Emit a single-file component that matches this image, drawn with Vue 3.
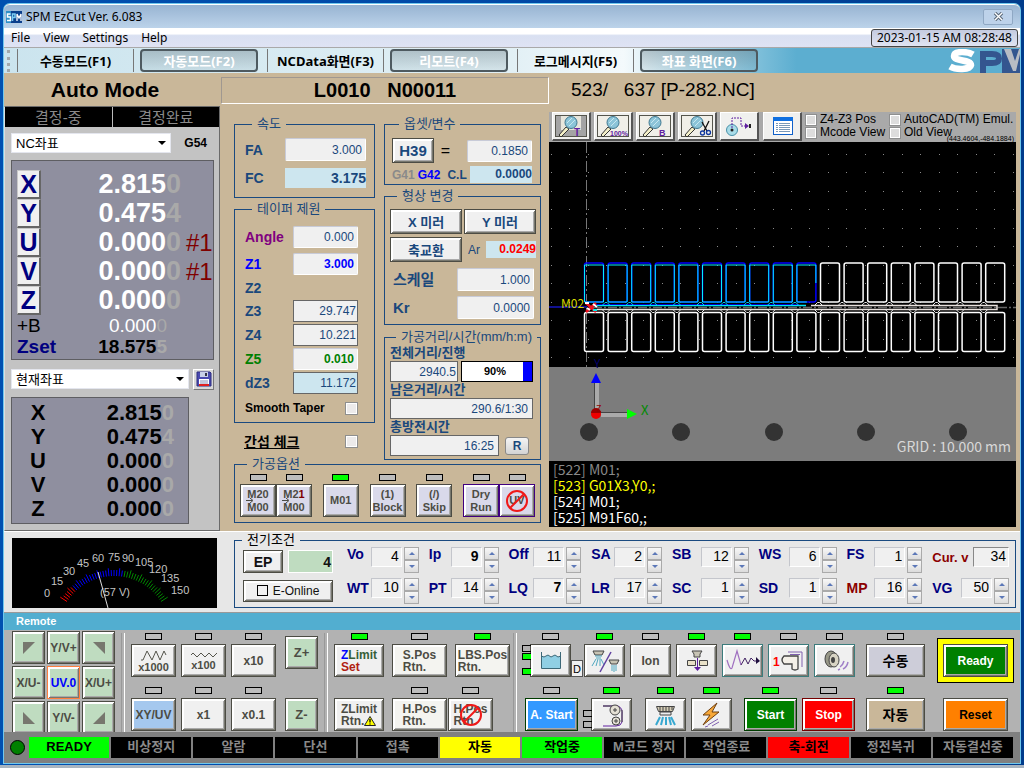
<script setup>
import { ref } from 'vue'

const tabs = [
  { label: '수동모드(F1)', on: false },
  { label: '자동모드(F2)', on: true },
  { label: 'NCData화면(F3)', on: false },
  { label: '리모트(F4)', on: true },
  { label: '로그메시지(F5)', on: false },
  { label: '좌표 화면(F6)', on: true }
]
const axes = [
  { name: 'X', main: '2.815', last: '0', note: '' },
  { name: 'Y', main: '0.475', last: '4', note: '' },
  { name: 'U', main: '0.000', last: '0', note: '#1' },
  { name: 'V', main: '0.000', last: '0', note: '#1' },
  { name: 'Z', main: '0.000', last: '0', note: '' }
]
const taper = [
  { id: 'angle', name: 'Angle', value: '0.000', tone: 'purple', kind: 'soft' },
  { id: 'z1', name: 'Z1', value: '3.000', tone: 'blue', kind: 'soft' },
  { id: 'z2', name: 'Z2', value: '', tone: '', kind: '' },
  { id: 'z3', name: 'Z3', value: '29.747', tone: '', kind: 'hard' },
  { id: 'z4', name: 'Z4', value: '10.221', tone: '', kind: 'hard' },
  { id: 'z5', name: 'Z5', value: '0.010', tone: 'green', kind: 'soft' },
  { id: 'dz3', name: 'dZ3', value: '11.172', tone: '', kind: 'hard tint' }
]
const params = ref([
  { name: 'Vo', value: 4 }, { name: 'Ip', value: 9, bold: true }, { name: 'Off', value: 11 },
  { name: 'SA', value: 2 }, { name: 'SB', value: 12 }, { name: 'WS', value: 6 },
  { name: 'FS', value: 1 }, { name: 'Cur. v', value: 34, red: true, plain: true },
  { name: 'WT', value: 10 }, { name: 'PT', value: 14 }, { name: 'LQ', value: 7, bold: true },
  { name: 'LR', value: 17 }, { name: 'SC', value: 1 }, { name: 'SD', value: 1 },
  { name: 'MP', value: 16, red: true }, { name: 'VG', value: 50 }
])
const status = [
  { text: 'READY', tone: 'lime' }, { text: '비상정지' }, { text: '알람' }, { text: '단선' },
  { text: '접촉' }, { text: '자동', tone: 'yellow' }, { text: '작업중', tone: 'lime' },
  { text: 'M코드 정지' }, { text: '작업종료' }, { text: '축-회전', tone: 'red' },
  { text: '정전복귀' }, { text: '자동결선중' }
]
const lines = [
  { text: '[522] M01;', tone: 'past' },
  { text: '[523] G01X3,Y0,;', tone: 'now' },
  { text: '[524] M01;', tone: '' },
  { text: '[525] M91F60,;', tone: '' }
]
const progress = 90

const gaugeLabels = [
  ['0', 32, 59], ['15', 39, 47], ['30', 51, 37], ['45', 65, 29], ['60', 80, 24], ['75', 96, 23],
  ['90', 110, 24], ['105', 123, 28], ['120', 137, 35], ['135', 149, 44], ['150', 159, 56]
]
const ticks = Array.from({ length: 45 }, (_, i) => {
  const deg = -57 + (i * 114) / 44
  const a = (deg * Math.PI) / 180
  const long = i % 4 === 0
  const r1 = long ? 64 : 62
  const r2 = 56
  return {
    x1: 102 + r1 * Math.sin(a), y1: 94 - r1 * Math.cos(a),
    x2: 102 + r2 * Math.sin(a), y2: 94 - r2 * Math.cos(a),
    color: i < 6 ? '#f00' : i < 26 ? '#00f' : '#080'
  }
})
const cells = Array.from({ length: 18 }, (_, i) => 35.5 + i * 23.6)
const dotCols = Array.from({ length: 26 }, (_, i) => Math.round(2 + i * 18.46))
const dotRows = Array.from({ length: 12 }, (_, i) => Math.round(12 + i * 18.46))
const holes = [40, 132, 225, 317, 409]
</script>

<template>
  <div class="desktop">
    <div class="window">
      <header class="titlebar">
        <svg class="app-icon" width="16" height="12" viewBox="0 0 16 12">
          <rect width="16" height="12" fill="#0a3f8c" /><rect width="5" height="12" fill="#2e8fc8" />
          <path d="M4.500 3H1.500v3h3v3.500H1" fill="none" stroke="#fff" stroke-width="1.500" />
          <path d="M6.500 10V3h2.500v3.500H7" fill="none" stroke="#7ed0f4" stroke-width="1.500" />
          <path d="M11 10V3l2 4 2-4v7" fill="none" stroke="#fff" stroke-width="1.300" />
        </svg>
        <span class="title">SPM EzCut Ver. 6.083</span>
        <button class="close" aria-label="Close">
          <svg width="11" height="9" viewBox="0 0 11 9"><path d="M2 1l7 7M9 1l-7 7" stroke="#5a6878" stroke-width="3.4" /><path d="M2 1l7 7M9 1l-7 7" stroke="#fff" stroke-width="1.4" /></svg>
        </button>
      </header>
      <nav class="menubar">
        <a href="#">File</a><a href="#">View</a><a href="#">Settings</a><a href="#">Help</a>
        <time class="clock">2023-01-15 AM 08:28:48</time>
      </nav>
      <div class="toolbar">
        <span class="grip"></span>
        <button v-for="t in tabs" :key="t.label" class="tab" :class="{ on: t.on }">{{ t.label }}</button>
        <svg class="logo" width="72" height="24" viewBox="0 0 72 24">
          <path d="M25 5.500C20 2.500 6 1.500 6 7C6 13 23 10 23 16C22 21 8 21 2 17.500" fill="none" stroke="#fff" stroke-width="6.500" />
          <path d="M35 24V5h9q7 0 7 4.500t-7 4.500h-6" fill="none" stroke="#34568f" stroke-width="6" />
          <rect x="54" width="18" height="24" fill="#34568f" />
          <path d="M56 0h7l4 12l4-12h1v5l-4 17h-3z" fill="#b8bcc4" />
        </svg>
      </div>

      <main class="main">
        <h1 class="mode">Auto Mode</h1>
        <div class="program">L0010&nbsp;&nbsp; N00011</div>
        <div class="file">523/&nbsp;&nbsp; 637 [P-282.NC]</div>

        <section class="left">
          <div class="decide"><span>결정-중</span><span>결정완료</span></div>
          <div class="pick">
            <span class="combo nc"><select aria-label="NC좌표"><option>NC좌표</option></select></span>
            <b>G54</b>
          </div>
          <div class="axes">
            <div v-for="a in axes" :key="a.name" class="axis">
              <button class="axis-btn">{{ a.name }}</button>
              <span class="num">{{ a.main }}<i>{{ a.last }}</i></span>
              <span class="note">{{ a.note }}</span>
            </div>
            <div class="sub plain"><span>+B</span><span class="num">0.000<i>0</i></span></div>
            <div class="sub zset"><span>Zset</span><span class="num">18.575<i>5</i></span></div>
          </div>
          <div class="pick second">
            <span class="combo cur"><select aria-label="현재좌표"><option>현재좌표</option></select></span>
            <button class="save" aria-label="Save">
              <svg width="16" height="16" viewBox="0 0 16 16"><path d="M1 1h13l1 1v13H1z" fill="#4a4ab0" stroke="#2c2c80" /><path d="M4 1h8v5H4z" fill="#c8d0e8" /><path d="M9 2h2v3H9z" fill="#334" /><path d="M3 8h10v7H3z" fill="#fff" /><path d="M4 10h8M4 12h8" stroke="#8890b8" /><path d="M3 14h10" stroke="#e02020" stroke-width="2" /></svg>
            </button>
          </div>
          <div class="axes small">
            <div v-for="a in axes" :key="a.name" class="axis">
              <span class="axis-name">{{ a.name }}</span>
              <span class="num">{{ a.main }}<i>{{ a.last }}</i></span>
            </div>
          </div>
        </section>

        <section class="center">
          <div class="cols">
            <div class="col1">
              <fieldset class="speed">
                <legend>속도</legend>
                <div class="row"><label for="fa">FA</label><input id="fa" class="box soft" value="3.000"></div>
                <div class="row"><label for="fc">FC</label><output id="fc" class="box tint strong">3.175</output></div>
              </fieldset>
              <fieldset class="taper">
                <legend>테이퍼 제원</legend>
                <div v-for="t in taper" :key="t.id" class="row" :class="[t.id, t.tone]">
                  <label :for="t.value ? t.id : undefined">{{ t.name }}</label>
                  <input v-if="t.value" :id="t.id" class="box" :class="t.kind" :value="t.value">
                </div>
                <div class="row smooth"><label for="smooth">Smooth Taper</label><input id="smooth" type="checkbox" class="tick"></div>
              </fieldset>
              <div class="row check"><label for="interf">간섭 체크</label><input id="interf" type="checkbox" class="tick"></div>
            </div>
            <div class="col2">
              <fieldset class="offset">
                <legend>옵셋/변수</legend>
                <div class="row"><button class="btn h39">H39</button><span class="eq">=</span><input class="box soft" aria-label="H39" value="0.1850"></div>
                <div class="row comp"><span class="g41">G41</span><span class="g42">G42</span><span class="cl">C.L</span><output class="box tint">0.0000</output></div>
              </fieldset>
              <fieldset class="shape">
                <legend>형상 변경</legend>
                <div class="row"><button class="btn wide">X 미러</button><button class="btn wide">Y 미러</button></div>
                <div class="row"><button class="btn wide">축교환</button><span class="ar">Ar</span><output class="box tint arv">0.0249</output></div>
                <div class="row scale"><label for="scale">스케일</label><input id="scale" class="box soft" value="1.000"></div>
                <div class="row kr"><label for="kr">Kr</label><input id="kr" class="box soft" value="0.0000"></div>
              </fieldset>
              <fieldset class="dist">
                <legend>가공거리/시간(mm/h:m)</legend>
                <label for="total">전체거리/진행</label>
                <div class="row">
                  <input id="total" class="box hard" value="2940.5">
                  <div class="progress" role="progressbar" :aria-valuenow="progress"><span class="left-part" :style="{ width: 100 - progress + 3 + '%' }"></span><b>{{ progress }}%</b></div>
                </div>
                <label for="remain">남은거리/시간</label>
                <div class="row"><input id="remain" class="box hard pad" value="290.6/1:30"></div>
                <label for="spent">총방전시간</label>
                <div class="row"><input id="spent" class="box hard" value="16:25"><button class="reset-r">R</button></div>
              </fieldset>
            </div>
          </div>
          <fieldset class="options">
            <legend>가공옵션</legend>
            <div class="opts">
              <div class="pair">
                <div class="unit"><span class="led"></span><button class="btn opt">M20<br>M00<svg class="arrow" width="8" height="5" viewBox="0 0 8 5"><path d="M0 2.500h6M4 0l3 2.500L4 5" /></svg></button></div>
                <div class="unit"><span class="led"></span><button class="btn opt">M2<u>1</u><br>M00<svg class="arrow" width="8" height="5" viewBox="0 0 8 5"><path d="M0 2.500h6M4 0l3 2.500L4 5" /></svg></button></div>
              </div>
              <div class="unit"><span class="led lit"></span><button class="btn opt">M01</button></div>
              <div class="unit"><span class="led"></span><button class="btn opt">(1)<br>Block</button></div>
              <div class="unit"><span class="led"></span><button class="btn opt">(/)<br>Skip</button></div>
              <div class="pair">
                <div class="unit"><span class="led"></span><button class="btn opt violet">Dry<br>Run</button></div>
                <div class="unit"><span class="led"></span><button class="btn opt violet">UV<svg class="ban" width="24" height="24" viewBox="0 0 24 24"><circle cx="12" cy="12" r="10" /><path d="M5 19L19 5" /></svg></button></div>
              </div>
            </div>
          </fieldset>
        </section>

        <section class="right">
          <div class="tools">
            <button class="tool" aria-label="Zoom T">
              <svg viewBox="0 0 34 24"><rect x="1.500" y="1.500" width="31" height="21" fill="#e8e6dc" stroke="#55554c" /><path d="M2 2h5v20H2zM27 2h5v20h-5zM7 16h20v6H7z" fill="#a4a4a4" /><path d="M12 13l-7 8 2 2 8-8z" fill="#f4f0c8" stroke="#333" /><circle cx="17" cy="8.500" r="6" fill="#8cc4d8" stroke="#3f7890" /><path d="M13 9l5-5M15 12l6-6" stroke="#c8e8f0" /><text x="20" y="22" font-size="10" font-weight="bold" fill="#6020a0">T</text></svg>
            </button>
            <button class="tool" aria-label="Zoom 100%">
              <svg viewBox="0 0 34 24"><rect x="1.500" y="1.500" width="31" height="21" fill="#f0efe8" stroke="#55554c" /><path d="M12 13l-7 8 2 2 8-8z" fill="#f4f0c8" stroke="#333" /><circle cx="17" cy="8.500" r="6" fill="#8cc4d8" stroke="#3f7890" /><path d="M13 9l5-5M15 12l6-6" stroke="#c8e8f0" /><text x="14" y="22" font-size="7" font-weight="bold" fill="#6020a0">100%</text></svg>
            </button>
            <button class="tool" aria-label="Zoom B">
              <svg viewBox="0 0 34 24"><rect x="1.500" y="1.500" width="31" height="21" fill="#f0efe8" stroke="#55554c" /><path d="M12 13l-7 8 2 2 8-8z" fill="#f4f0c8" stroke="#333" /><circle cx="17" cy="8.500" r="6" fill="#8cc4d8" stroke="#3f7890" /><path d="M13 9l5-5M15 12l6-6" stroke="#c8e8f0" /><text x="21" y="22" font-size="9" font-weight="bold" fill="#6020a0">B</text></svg>
            </button>
            <button class="tool" aria-label="Zoom cut">
              <svg viewBox="0 0 34 24"><rect x="1.500" y="1.500" width="31" height="21" fill="#f0efe8" stroke="#55554c" /><path d="M12 13l-7 8 2 2 8-8z" fill="#f4f0c8" stroke="#333" /><circle cx="17" cy="8.500" r="6" fill="#8cc4d8" stroke="#3f7890" /><path d="M13 9l5-5M15 12l6-6" stroke="#c8e8f0" /><path d="M22 8l5 9M29 7l-5 10" stroke="#111" stroke-width="1.300" /><circle cx="22.500" cy="19" r="2" fill="none" stroke="#1038a0" stroke-width="1.300" /><circle cx="28.500" cy="18.500" r="2" fill="none" stroke="#1038a0" stroke-width="1.300" /></svg>
            </button>
            <button class="tool" aria-label="Path">
              <svg viewBox="0 0 34 24"><circle cx="10" cy="16" r="5.500" fill="#a8dce8" stroke="#4890a8" /><circle cx="10" cy="16" r="1.500" fill="#222" /><path d="M10 14V4h9v8h5" fill="none" stroke="#6020a0" stroke-dasharray="2 1" /><path d="M23 9l4 3-4 3z" fill="#6020a0" /><path d="M27 10h2v4h-2z" fill="#222" /></svg>
            </button>
            <button class="tool list" aria-label="List">
              <svg viewBox="0 0 34 24"><rect x="8.500" y="3.500" width="19" height="17" fill="#fff" stroke="#1060c8" /><path d="M8 3h20v4H8z" fill="#1070e0" /><path d="M11 9.500h2M11 11.500h2M11 13.500h2M11 15.500h2M11 17.500h2M14 9.500h11M14 11.500h11M14 13.500h11M14 15.500h11M14 17.500h11" stroke="#7898b8" /></svg>
            </button>
            <div class="flags">
              <label><input type="checkbox" class="tick">Z4-Z3 Pos</label>
              <label><input type="checkbox" class="tick">AutoCAD(TM) Emul.</label>
              <label><input type="checkbox" class="tick">Mcode View</label>
              <label><input type="checkbox" class="tick">Old View</label>
            </div>
            <span class="coords">(443.4604,-484.1884)</span>
          </div>
          <svg class="cad" viewBox="0 0 467 319" preserveAspectRatio="none">
            <rect width="467" height="319" fill="#000" />
            <g v-for="y in dotRows" :key="y" fill="#8a8a8a" shape-rendering="crispEdges"><rect v-for="x in dotCols" :key="x" :x="x" :y="y" width="1" height="1" /></g>
            <path d="M37.500 0V225" stroke="#777" stroke-dasharray="11 3 2 3" />
            <path d="M0 165H38" stroke="#1616c0" stroke-width="1.500" />
            <path d="M44 165.500H467" stroke="#666" stroke-width="1.500" stroke-dasharray="9 2 2 2" />
            <path d="M48 167.500H448V163.500H262" fill="none" stroke="#e8e0dc" stroke-width="1.500" />
            <path d="M48 163.500H257" stroke="#00e8f8" stroke-width="1.500" /><path d="M44 162.500H250" stroke="#00c" />
            <g v-for="(x, i) in cells" :key="x" fill="none">
              <path v-if="i > 0" :d="`M${x - 6} 163.500l3 -3h2l3 3`" :stroke="i < 10 ? '#0cf' : '#eee'" />
              <path v-if="i > 0" :d="`M${x - 6} 167.500l3 3h2l3 -3`" stroke="#eee" />
              <rect :x="x" y="121" width="19" height="39" rx="2" :stroke="i < 10 ? '#00f' : '#fff'" stroke-width="1.500" />
              <path v-if="i < 9" :d="`M${x} 123H${x + 19}V160H${x}Z`" stroke="#00f0ff" stroke-width="1" />
              <path v-if="i === 9" :d="`M${x + 19} 141V123H${x}V160H${x + 10}`" stroke="#00f0ff" stroke-width="1" />
              <rect :x="x" y="170.500" width="19" height="39" rx="2" stroke="#fff" stroke-width="1.500" />
            </g>
            <path d="M37 161l10 9M47 161l-10 9" stroke="#f01020" stroke-width="2.500" /><path d="M36 161h4M44 162l4 3M38 166l3 2" stroke="#fff" stroke-width="2" /><path d="M44 168h4" stroke="#0ee" stroke-width="2" />
            <text x="12" y="166" font-size="12" fill="#d8d800">M02</text>
            <rect y="225" width="467" height="94" fill="#7c7c7c" />
            <text x="45" y="226" font-size="12" fill="#00006c">Y</text>
            <circle v-for="x in holes" :key="x" :cx="x" cy="290" r="9" fill="#333" />
            <path d="M45 240h5v28h-5z" fill="#aaa" /><path d="M45.500 240v28" stroke="#444" />
            <path d="M52 270h26v5H52z" fill="#aaa" /><path d="M52 270.500h26" stroke="#444" />
            <path d="M47 231l5 10H42z" fill="#00f" /><path d="M88 272l-10-5v10z" fill="#0f0" />
            <circle cx="47" cy="272" r="5" fill="#e00" /><path d="M42 271a5 5 0 0 1 10 0z" fill="#900" />
            <text x="47" y="270" font-size="9" fill="#900000">Z</text>
            <text x="92" y="273" font-size="13" fill="#008a00">X</text>
            <text x="462" y="310" font-size="14" fill="#d8d8d8" text-anchor="end">GRID : 10.000 mm</text>
          </svg>
          <div class="code"><div v-for="l in lines" :key="l.text" :class="l.tone">{{ l.text }}</div></div>
        </section>
      </main>

      <section class="electric">
        <svg class="gauge" viewBox="0 0 205 70">
          <rect width="205" height="70" fill="#000" />
          <line v-for="(t, i) in ticks" :key="i" :x1="t.x1" :y1="t.y1" :x2="t.x2" :y2="t.y2" :stroke="t.color" />
          <text v-for="g in gaugeLabels" :key="g[0]" :x="g[1]" :y="g[2]">{{ g[0] }}</text>
          <text x="88" y="58">(57 V)</text>
          <path d="M86 34L96 70" stroke="#ddd" />
        </svg>
        <fieldset class="cond">
          <legend>전기조건</legend>
          <div class="cond-body">
            <div class="ep">
              <button class="btn epb">EP</button><output class="box green-box">4</output>
              <button class="btn online"><span class="sq"></span>E-Online</button>
            </div>
            <div class="params">
              <div v-for="p in params" :key="p.name" class="param" :class="{ red: p.red, bold: p.bold, plain: p.plain }">
                <label :for="'p-' + p.name">{{ p.name }}</label>
                <input :id="'p-' + p.name" v-model="p.value" class="box">
                <span v-if="!p.plain" class="spin"><button :aria-label="p.name + ' +'" @click="p.value++"></button><button :aria-label="p.name + ' -'" class="down" @click="p.value--"></button></span>
              </div>
            </div>
          </div>
        </fieldset>
      </section>

      <section class="remote">
        <h2>Remote</h2>
        <div class="panel">
          <div class="dpad">
            <button class="btn" aria-label="up left"><svg width="12" height="12"><path d="M0 0h12L0 12z" /></svg></button>
            <button class="btn">Y/V+</button>
            <button class="btn" aria-label="up right"><svg width="12" height="12"><path d="M0 0h12v12z" /></svg></button>
            <button class="btn">X/U-</button>
            <button class="btn home">UV.0</button>
            <button class="btn">X/U+</button>
            <button class="btn" aria-label="down left"><svg width="12" height="12"><path d="M0 0v12h12z" /></svg></button>
            <button class="btn">Y/V-</button>
            <button class="btn" aria-label="down right"><svg width="12" height="12"><path d="M12 0v12H0z" /></svg></button>
          </div>
          <div class="sep"></div>
          <div class="steps">
            <div class="unit"><span class="led"></span><button class="btn key stack"><svg width="28" height="11" viewBox="0 0 28 11"><path d="M1 10h2l4-9 5 9 4-9 4 9 4-9 2 4" fill="none" stroke="#55554c" /></svg>x1000</button></div>
            <div class="unit"><span class="led"></span><button class="btn key stack"><svg width="28" height="8" viewBox="0 0 28 8"><path d="M1 4l2-2 4 4 4-4 4 4 4-4 4 4 4-4" fill="none" stroke="#55554c" /></svg>x100</button></div>
            <div class="unit"><span class="led"></span><button class="btn key">x10</button></div>
            <div class="unit"><span class="led"></span><button class="btn key sky">XY/UV</button></div>
            <div class="unit"><span class="led"></span><button class="btn key">x1</button></div>
            <div class="unit"><span class="led"></span><button class="btn key">x0.1</button></div>
          </div>
          <div class="zs"><button class="btn">Z+</button><button class="btn">Z-</button></div>
          <div class="sep"></div>
          <div class="returns">
            <div class="line">
              <div class="unit w50"><span class="led lit"></span><button class="btn key text"><span><span class="cb">Z</span><span class="cg">Limit</span><br><span class="cr">Set</span></span></button></div>
              <div class="unit w55"><span class="led"></span><button class="btn key text pale"><span>S.Pos<br>Rtn.</span></button></div>
              <div class="unit w55"><span class="led lit"></span><button class="btn key text pale"><span>LBS.Pos<br>Rtn.</span></button></div>
            </div>
            <div class="line">
              <div class="unit w50"><span class="led none"></span><button class="btn key text"><span>ZLimit<br>Rtn.<svg width="12" height="10" viewBox="0 0 12 10"><path d="M6 .5L11.500 9.500H.5z" fill="#ff0" stroke="#222" /><path d="M6 3v3.500M6 7.500v1" stroke="#000" stroke-width="1.300" /></svg></span></button></div>
              <div class="unit w55"><span class="led"></span><button class="btn key text pale"><span>H.Pos<br>Rtn.</span></button></div>
              <div class="unit w45"><span class="led"></span><button class="btn key text"><span>H.Pos<br>Rtn.</span><svg class="ban" width="24" height="24" viewBox="0 0 24 24"><circle cx="12" cy="12" r="10" /><path d="M5 19L19 5" /></svg></button></div>
            </div>
          </div>
          <div class="sep"></div>
          <div class="machine">
            <div class="line">
              <div class="unit tank">
                <i class="side s1"></i><i class="side s2 lit"></i><i class="side s3 lit"></i>
                <span class="led"></span>
                <button class="btn key" aria-label="Tank"><svg width="34" height="26" viewBox="0 0 34 26"><path d="M7 7l3 2 4-2 3 2 4-2 3 2 3-2v13H7z" fill="#90cfe4" /><path d="M7.500 4v16.500h19V4M7 8l3 1 4-2 3 2 4-2 3 2 3-1" fill="none" stroke="#3c6878" /></svg></button>
                <button class="d">D</button>
              </div>
              <div class="unit"><span class="led lit"></span><button class="btn key" aria-label="Flush"><svg width="34" height="26" viewBox="0 0 34 26"><path d="M5 3h11l-2 4H7z" fill="#c8c4b4" stroke="#444" /><path d="M7 8h7M8 10h5M8 11l-4 7M10 11l-2 7M12 11v7M13 11l3 6" stroke="#50a8c0" /><path d="M23 4L12 24" stroke="#6040a0" stroke-width="1.500" /><path d="M21 12h10l-2 4h-6z" fill="#c8c4b4" stroke="#444" /><path d="M24 17v6M26 17v7M28 17v6" stroke="#50a8c0" /></svg></button></div>
              <div class="unit"><span class="led"></span><button class="btn key">Ion</button></div>
              <div class="unit"><span class="led lit"></span><button class="btn key" aria-label="Thread"><svg width="34" height="26" viewBox="0 0 34 26"><path d="M12 3h10l-2 3v3h-6V6z" fill="#c8c4b4" stroke="#444" /><path d="M7.500 12.500h8v5h-8zM19.500 12.500h8v5h-8z" fill="#e8e0c8" stroke="#444" /><path d="M17.500 10v10" stroke="#6020a0" /><path d="M14 19h7l-3.500 4z" fill="#6020a0" /></svg></button></div>
              <div class="unit"><span class="led lit"></span><button class="btn key teal" aria-label="Servo"><svg width="36" height="26" viewBox="0 0 36 26"><path d="M2 12q3 11 5 8l5-17 4 14" fill="none" stroke="#a070c0" stroke-width="1.200" /><path d="M16 17l4-7 3 6 3-6 3 3h5" fill="none" stroke="#402060" /><path d="M31 9l4 4-4 3z" fill="#201040" /></svg></button></div>
              <div class="unit"><span class="led"></span><button class="btn key teal" aria-label="Corner"><svg width="34" height="26" viewBox="0 0 34 26"><text x="1" y="18" font-size="12" font-weight="bold" fill="#f00">1</text><path d="M12 8h14v13q-3 2-6 0v-5h-8q-4-4 0-8z" fill="#f4f0e8" stroke="#444" stroke-width="1.300" /><path d="M16 4h14v15M18 6.500h10" fill="none" stroke="#8060b0" /></svg></button></div>
              <div class="unit"><span class="led"></span><button class="btn key teal" aria-label="Buzzer"><svg width="34" height="26" viewBox="0 0 34 26"><ellipse cx="13" cy="11" rx="6" ry="8" fill="#989888" stroke="#444" /><ellipse cx="16" cy="12" rx="5" ry="7" fill="#d8d4c4" stroke="#444" /><ellipse cx="15" cy="12" rx="2" ry="3" fill="#444" /><path d="M22 19q3-2 4-6M25 21q4-2 5-7M20 22l2-1" fill="none" stroke="#a080c8" stroke-width="1.500" /></svg></button></div>
            </div>
            <div class="line spread">
              <div class="line a">
                <div class="unit w53"><span class="led"></span><button class="btn key astart">A. Start</button></div>
                <div class="unit belt"><i class="side s4"></i><i class="side s5"></i><span class="led lit"></span><button class="btn key" aria-label="Wire"><svg width="34" height="26" viewBox="0 0 34 26"><path d="M8 4h15q5 2 4 9v7q-1 4-6 4H8" fill="none" stroke="#6020a0" /><path d="M8 4h14M27 8v12" stroke="#444" /><circle cx="20" cy="8" r="5" fill="#e4e0d4" stroke="#444" /><circle cx="21" cy="19" r="4" fill="#e4e0d4" stroke="#444" /><path d="M18 8h4M20 6v4M19 19h4M21 17v4" stroke="#444" /></svg></button></div>
              </div>
              <div class="line">
                <div class="unit"><span class="led lit"></span><button class="btn key" aria-label="Jet"><svg width="34" height="26" viewBox="0 0 34 26"><path d="M8.500 4.500h18l-2 5h-14z" fill="#d4ccb4" stroke="#444" /><path d="M12 10h11v3H12zM12 4v5M15 4v5M18 4v5M21 4v5M24 4v4" fill="#eee" stroke="#444" /><path d="M12 15l-4 8M15 15l-2 8M18 15v8M21 15l2 8M23 15l4 8" stroke="#38a8d0" stroke-width="2" /></svg></button></div>
                <div class="unit"><span class="led lit"></span><button class="btn key" aria-label="Spark"><svg width="34" height="26" viewBox="0 0 34 26"><path d="M23 1L9 13h7L9 23l16-13h-7z" fill="#f8a838" stroke="#704010" /><path d="M14 23l10-6M18 24l7-4M11 25l3-1" stroke="#8060b0" /></svg></button></div>
              </div>
              <div class="line">
                <div class="unit w53"><span class="led lit"></span><button class="btn key start">Start</button></div>
                <div class="unit w53"><span class="led"></span><button class="btn key stop">Stop</button></div>
              </div>
            </div>
          </div>
          <div class="modes">
            <div class="unit w59"><span class="led"></span><button class="btn key manual">수동</button></div>
            <div class="unit w59"><span class="led lit"></span><button class="btn key auto">자동</button></div>
          </div>
          <div class="finals">
            <div class="halo"><button class="btn key ready">Ready</button></div>
            <button class="btn key reset">Reset</button>
          </div>
        </div>
      </section>

      <footer class="status">
        <span class="lamp"></span>
        <div class="cells"><span v-for="s in status" :key="s.text" :class="s.tone">{{ s.text }}</span></div>
      </footer>
    </div>
  </div>
</template>

<style>
body { background: #8d9cab; }
</style>

<style scoped>
* { box-sizing: border-box; }
.desktop {
  padding: 4px 4px 2px 4px; border-bottom: 3px solid #a8b4c0;
  background: linear-gradient(to right, #0050b0, #0047a4 60%, #003c8c);
  font: 12px "Liberation Sans", "Noto Sans CJK KR", sans-serif; color: #000;
}
button, input, select { font: inherit; margin: 0; padding: 0; color: inherit; border-radius: 0; }
button { cursor: pointer; white-space: nowrap; }
i { font-style: normal; }
.window { border-radius: 6px 6px 0 0; background: #808080; box-shadow: 0 0 0 1px #70c8ee; display: flex; flex-direction: column; }

.titlebar { height: 24px; display: flex; align-items: center; gap: 4px; padding: 0 7px 0 2px; border-top: 1px solid #fff; border-radius: 6px 6px 0 0; background: linear-gradient(#98b4d2, #bcd3ea); font-family: "Noto Sans", sans-serif; }
.title { flex: 1; font-size: 12px; }
.close { width: 30px; height: 16px; display: flex; align-items: center; justify-content: center; background: #bdd2ea; border: 1px solid #8fa8c4; border-radius: 2px; }
.menubar { height: 20px; display: flex; align-items: center; gap: 13px; padding: 0 2px 0 7px; background: linear-gradient(#fff 30%, #d9e0f1 40%, #dfe3f4); border-bottom: 1px solid #a9a9a9; font-family: "Noto Sans", sans-serif; }
.menubar a { color: #000; text-decoration: none; }
.clock { margin-left: auto; height: 18px; line-height: 16px; padding: 0 5px; border: 1px solid #444; border-radius: 3px; background: linear-gradient(#c4cbe0, #e0e4f2); font-size: 12px; }
.toolbar { height: 25px; display: flex; align-items: center; gap: 8px; background: linear-gradient(to right, #cbe4ee, #e2f0f5 50%, #f4fafc 61%, #5caed0 78%); overflow: hidden; }
.grip { width: 5px; height: 22px; border-left: 3px dotted #a0a8ac; margin-left: 3px; margin-right: -3px; }
.tab { position: relative; width: 117px; height: 23px; flex: none; background: none; border: 0; border-left: 1px solid #777; border-right: 1px solid #777; font-weight: bold; font-size: 13px; line-height: 20px; font-family: "Noto Sans", "Noto Sans CJK KR", sans-serif; }
.tab.on { margin-left: -2px; width: 118px; margin-right: 1px; border: 2px solid #4e5a60; border-radius: 4px; color: #fff; background: linear-gradient(rgba(90, 110, 120, .35), rgba(110, 140, 150, .12)); line-height: 18px; }
.logo { margin-left: auto; flex: none; }

.main { display: grid; grid-template-columns: 216px 329px minmax(0, 1fr); grid-template-rows: 33px auto; background: #c9b799; }
.mode, .program, .file { margin: 0; font-weight: bold; line-height: 33px; }
.mode { font-size: 21px; text-align: center; padding-right: 14px; }
.program { font-size: 20px; margin: 4px 0 2px 1px; line-height: 25px; border: 1px solid #a09890; border-right-color: #fff; border-bottom-color: #fff; text-align: center; }
.file { font-size: 19px; font-weight: normal; padding-left: 22px; }

.left { background: #c3c3c3; border: 1px solid #6a6a6a; border-left-color: #ddd; padding: 0 5px 5px 6px; }
.decide { display: grid; grid-template-columns: 1fr 1fr; gap: 1px; background: #bbb; margin: 0 -5px 0 -6px; }
.decide span { background: #000; color: #8a8a8a; text-align: center; height: 20px; line-height: 22px; font-size: 15px; }
.pick { display: flex; align-items: center; justify-content: space-between; margin-top: 6px; height: 20px; font-size: 13px; }
.pick b { padding-right: 7px; font-size: 12px; }
.combo { position: relative; display: block; height: 20px; }
.combo select { appearance: none; width: 100%; height: 100%; border: 1px solid #e4e6ee; background: #fff; padding: 0 4px; font-size: 13px; }
.combo::after { content: ""; position: absolute; right: 5px; top: 8px; border: 4px solid transparent; border-top-color: #000; border-bottom: 0; pointer-events: none; }
.nc { width: 160px; }
.cur { width: 178px; }
.save { width: 21px; height: 21px; display: flex; align-items: center; justify-content: center; background: #d8d8d8; border: 1px solid #fff; border-right-color: #777; border-bottom-color: #777; }
.axes { margin-top: 7px; border: 1px solid #5e5e62; background: #8f8f9f; padding: 9px 0 0 5px; color: #fff; height: 200px; }
.axis { display: flex; align-items: center; height: 29px; }
.axis-btn { width: 24px; height: 29px; background: #f0f0f0; border: 1px solid #c8c8c8; border-right: 2px solid #666; border-bottom: 2px solid #666; color: #000080; font-weight: bold; font-size: 25px; line-height: 24px; }
.num { font-weight: bold; text-align: right; }
.num i { color: #a9a9a9; }
.axis .num { width: 140px; font-size: 27px; }
.note { color: #800000; font-size: 24px; padding-left: 5px; }
.sub { display: flex; line-height: 22px; height: 21px; font-size: 19px; color: #000; }
.sub span:first-child { width: 60px; }
.sub .num { width: 90px; }
.plain .num { color: #fff; font-weight: normal; }
.zset { font-weight: bold; }
.zset span:first-child { color: #000080; }
.pick.second { margin-top: 9px; }
.axes.small { margin-top: 8px; width: 178px; height: 127px; color: #000; padding: 3px 0 0 15px; }
.small .axis { height: 24px; font-size: 22px; }
.small .axis-name { width: 22px; text-align: center; font-weight: bold; }
.small .axis .num { width: 125px; font-size: 22px; }

.center { padding: 10px 8px 0 14px; color: #1a487c; }
.cols { display: grid; grid-template-columns: 141px 157px; gap: 9px; align-items: start; }
fieldset { margin: 0; padding: 0; min-width: 0; border: 1px solid #1a4a80; }
legend { margin-left: 7px; padding: 0 5px; height: 16px; line-height: 16px; font-size: 13px; }
.row { display: flex; align-items: center; }
.box { display: block; text-align: right; border: 0; background: #f0f0f0; font-size: 12px; width: 65px; height: 22px; padding: 0 3px; min-width: 0; }
.soft { border: 1px solid #c8cbd8; border-right-color: #fff; border-bottom-color: #fff; border-radius: 2px; }
.hard { border: 1px solid #666; padding-right: 1px; }
.tint { background: #cde6ef; }
label { font-weight: bold; }
.speed { padding: 6px 8px 9px 10px; }
.speed label { flex: 1; font-size: 14px; }
.speed .box { width: 81px; height: 23px; }
.speed .row + .row { margin-top: 7px; }
.speed output.box { height: 20px; line-height: 20px; padding: 0; font-weight: bold; font-size: 14px; }
.taper { margin-top: 3px; padding: 6px 16px 1px 10px; }
.taper .row { height: 24px; font-size: 14px; }
.taper label { flex: 1; }
.taper .angle, .taper .z1 { height: 27px; }
.taper .z2 { height: 22px; }
.taper .smooth { height: 26px; font-size: 12px; color: #000; }
.purple label { color: #800080; }
.blue { color: #00f; }
.green { color: #008000; }
.blue .box, .green .box { font-weight: bold; }
.tick { appearance: none; width: 13px; height: 13px; flex: none; border: 1px solid #8e8f8f; background: #eceaea; box-shadow: inset 0 0 0 1px #fff; }
.check { margin-top: 9px; height: 18px; padding: 0 17px 0 10px; color: #000; }
.check label { flex: 1; text-decoration: underline; font-size: 14px; }
.btn { background: #f0f0f0; border: 1px solid #4c4c44; box-shadow: inset 1px 1px #fff, inset -1px -1px #77776e, inset 2px 2px #fff, inset -2px -2px #aaa; font-weight: bold; text-align: center; }
.offset { padding: 6px 8px 1px 7px; }
.h39 { width: 42px; height: 25px; font-size: 15px; }
.eq { flex: 1; text-align: center; color: #000; font-size: 16px; padding-right: 10px; }
.comp { margin-top: 3px; font-weight: bold; gap: 3px; }
.comp .box { height: 17px; line-height: 16px; padding: 0; margin-left: auto; }
.comp span { font-size: 12px; }
.g41 { color: #8a8a8a; }
.g42 { color: #00f; }
.cl { padding-left: 4px; }
.shape { margin-top: 3px; padding: 5px 4px 5px 5px; }
.shape .row { justify-content: space-between; }
.shape .row + .row { margin-top: 3px; }
.wide { width: 72px; height: 25px; font-size: 13px; }
.ar { margin-left: 6px; margin-right: auto; }
.box.arv { width: 50px; height: 17px; line-height: 17px; padding: 0; color: #f00; font-weight: bold; }
.shape .scale.row { margin-top: 6px; }
.shape .kr.row { margin-top: 5px; }
.scale label, .kr label { font-size: 15px; padding-left: 3px; line-height: 23px; }
.scale .box, .kr .box { width: 77px; height: 23px; margin-right: 2px; }
.dist { margin-top: 4px; padding: 0 7px 3px 5px; }
.dist legend { white-space: nowrap; margin-left: 6px; }
.dist > label { display: block; line-height: 16px; height: 16px; font-size: 13px; }
.dist .row { gap: 3px; }
.dist .box { flex: 1; height: 21px; }
.dist .pad { padding-right: 4px; }
.dist #spent { padding-right: 4px; }
.progress { position: relative; width: 72px; height: 21px; border: 1px solid #000; background: #fff; color: #000; text-align: center; line-height: 19px; font-size: 11px; }
.left-part { position: absolute; right: 0; top: 0; bottom: 0; background: #00f; }
.progress b { position: relative; padding-right: 4px; }
.reset-r { width: 24px; height: 18px; margin: 0 4px 0 3px; border: 1px solid #888; border-radius: 3px; background: linear-gradient(#f4f4f4, #d4d4d4); font-weight: bold; line-height: 14px; }
.options { margin-top: -4px; padding: 2px 5px 5px; }
.opts { display: flex; justify-content: space-between; }
.pair { display: flex; }
.unit { position: relative; display: flex; flex-direction: column; align-items: center; gap: 4px; }
.opts .unit { gap: 3px; }
.led { width: 17px; height: 7px; border: 1px solid #000; background: #bdbdbd; }
.lit { background: #0f0; }
.none { visibility: hidden; }
.opt { position: relative; width: 36px; height: 33px; font-size: 11px; line-height: 13px; background: #d9d9ea; color: #4c4c44; }
.arrow { position: absolute; left: 5px; top: 13px; fill: none; stroke: #4c4c44; }
.opt u { text-decoration: none; color: #800000; }
.violet { border-color: #400080; }
.ban { position: absolute; left: 50%; top: 50%; margin: -12px 0 0 -12px; fill: none; stroke: #f01818; stroke-width: 2; }

.right { display: flex; flex-direction: column; padding: 6px 4px 4px 0; }
.tools { position: relative; display: flex; gap: 3px; height: 30px; background: #a9a9a9; padding: 0 0 1px 3px; }
.tool { width: 39px; height: 29px; padding: 1px; flex: none; background: #f0f0ee; border: 1px solid #fff; border-right: 2px solid #555; border-bottom: 2px solid #555; }
.tool svg { display: block; width: 34px; height: 24px; }
.list { margin-left: 1px; }
.flags { display: grid; grid-template-columns: 84px auto; align-content: start; padding-top: 1px; }
.flags label { display: flex; align-items: center; gap: 3px; font-weight: normal; line-height: 13px; white-space: nowrap; }
.flags .tick { width: 12px; height: 12px; background: #ddd; }
.coords { position: absolute; right: 2px; bottom: -1px; font-size: 7px; line-height: 8px; }
.cad { display: block; width: 100%; height: 319px; font-family: "Noto Sans CJK KR", sans-serif; }
.code { background: #000; color: #fff; padding: 0 4px 2px; font: 14px/16px "Noto Sans CJK KR", sans-serif; flex: 1; }
.past { color: #888; }
.now { color: #ff0; }

.electric { display: flex; gap: 17px; padding: 0 4px 4px 8px; background: #e7e7e7; border-top: 1px solid #fff; border-bottom: 1px solid #999; }
.gauge { width: 205px; height: 70px; margin-top: 6px; flex: none; }
.gauge text { fill: #c4c4c4; font-size: 11px; }
.cond { flex: 1; height: 76px; }
.cond legend { color: #000; }
.cond-body { display: flex; padding: 0 6px 0 8px; margin-top: -1px; }
.ep { display: grid; grid-template-columns: 40px 45px; gap: 5px; padding-top: 3px; margin-right: 14px; color: #111; align-content: start; }
.epb { height: 23px; font-size: 14px; }
.green-box { width: auto; height: 23px; line-height: 23px; background: #bfdcc0; border: 1px solid #fff; font-weight: bold; font-size: 14px; padding: 0 1px; }
.online { grid-column: 1 / 3; height: 22px; margin-top: 2px; font-weight: normal; font-size: 12px; }
.sq { display: inline-block; width: 11px; height: 11px; border: 1px solid #000; margin-right: 5px; vertical-align: -1px; }
.params { flex: 1; display: grid; grid-template-columns: 71fr 80fr 83fr 81fr 87fr 88fr 86fr 87fr; gap: 5px 0; }
.param { display: flex; align-items: flex-start; gap: 2px; height: 26px; color: #000080; justify-content: flex-end; }
.param label { flex: 1; font-size: 14px; line-height: 14px; padding-left: 10px; white-space: nowrap; }
.param:nth-child(8n + 1) label { padding-left: 0; }
.param:nth-child(n + 9) label { padding-top: 3px; }
.param.red label { color: #8b0000; }
.param .box { width: 31px; height: 20px; flex: none; font-size: 14px; color: #000; padding: 0 2px 2px 0; border: 1px solid #c4c6cc; border-right-color: #fff; border-bottom-color: #fff; }
.param.bold .box { font-weight: bold; }
.param.plain label { padding-top: 4px; font-size: 13px; }
.param.plain .box { width: 36px; border-color: #888 #fff #fff #888; }
.spin { display: flex; flex-direction: column; width: 15px; }
.spin button { position: relative; height: 13px; border: 1px solid #aaa; background: linear-gradient(#f8f8f8, #dcdcdc); }
.spin button::after { content: ""; position: absolute; left: 4px; top: 4px; border: 3px solid transparent; border-top: 0; border-bottom-color: #5c78b8; }
.spin .down::after { border-top: 3px solid #5c78b8; border-bottom: 0; }

.remote h2 { margin: 0; height: 17px; line-height: 17px; padding-left: 12px; background: #52aed0; color: #fff; font-size: 11px; font-family: "Liberation Sans", sans-serif; }
.panel { display: flex; align-items: flex-start; height: 102px; padding: 3px 2px 0 8px; background: #b2b2b2; color: #4c4c44; overflow: hidden; }
.dpad { display: grid; grid-template-columns: repeat(3, 33px); grid-auto-rows: 33px; gap: 2px; margin-top: -2px; }
.dpad .btn, .zs .btn { background: #bfdcc0; font-size: 12px; }
.dpad .btn { display: flex; align-items: center; justify-content: center; }
.dpad svg { fill: #77776e; }
.dpad .home { border-color: #ff7f3f; color: #00f; }
.sep { width: 4px; height: 100px; margin: 0 6px; flex: none; border-left: 1px solid #999; border-right: 1px solid #fff; }
.sep + .machine { margin-left: 2px; }
.steps { display: grid; grid-template-columns: repeat(3, 45px); gap: 10px 5px; }
.key { width: 100%; height: 33px; font-size: 12px; line-height: 12px; }
.stack { font-size: 11px; display: flex; flex-direction: column; align-items: center; justify-content: center; gap: 1px; line-height: 10px; }
.sky { background: #a5c8ee; }
.zs { display: flex; flex-direction: column; gap: 29px; margin: 3px 0 0 9px; }
.zs .btn { width: 33px; height: 33px; font-size: 13px; }
.returns { display: flex; flex-direction: column; gap: 10px; width: 173px; flex: none; }
.returns .line { gap: 8px; }
.returns .unit { flex: none; }
.line { display: flex; gap: 5px; }
.text { position: relative; display: flex; align-items: center; justify-content: center; text-align: left; }
.text svg { vertical-align: -1px; }
.pale { background: #f4f4f0; }
.cb { color: #00f; } .cg { color: #386038; } .cr { color: #b02010; }
.w45 { width: 45px; margin-left: -7px; } .w50 { width: 50px; } .w53 { width: 53px; } .w55 { width: 55px; } .w59 { width: 59px; }
.machine { flex: 1; max-width: 340px; display: flex; flex-direction: column; gap: 10px; }
.machine .unit:not(.w53) { width: 41px; }
.machine .unit.tank { margin-left: 5px; margin-right: 8px; }
.machine svg { display: block; margin: 0 auto; max-width: none; }
.machine .key { padding: 0; }
.machine .unit.belt { margin-left: 8px; }
.spread { justify-content: space-between; }
.side { position: absolute; left: -8px; width: 9px; height: 7px; border: 1px solid #000; border-right: 0; }
.s1 { top: 12px; } .s2 { top: 20px; } .s3 { top: 35px; } .s4 { top: 23px; } .s5 { top: 34px; }
.d { position: absolute; left: 41px; top: 27px; width: 12px; height: 17px; border: 1px solid #555; background: #f0f0f0; color: #000; font-size: 11px; }
.teal { border-color: #3c7c7c; }
.astart { background: #3399ff; color: #fff; border-color: #003c00; }
.start { background: #008000; color: #fff; border-color: #003c00; }
.stop { background: #f00; color: #fff; border-color: #700; }
.modes { display: flex; flex-direction: column; gap: 10px; margin-left: 11px; color: #000; }
.modes .key { font-size: 14px; }
.manual { background: #cdcdd9; }
.auto { background: #c9b799; }
.finals { display: flex; flex-direction: column; align-items: center; margin: 5px 4px 0 12px; width: 77px; flex: none; gap: 15px; }
.halo { width: 77px; padding: 5px; background: #ff0; border: 1px solid #000; }
.ready { background: #008000; color: #fff; }
.reset { width: 65px; background: #ff8000; color: #000; }

.status { display: flex; align-items: center; gap: 4px; height: 31px; padding: 0 7px 0 6px; background: #808080; }
.lamp { width: 15px; height: 15px; border-radius: 50%; background: #008000; border: 1px solid #000; }
.cells { flex: 1; display: grid; grid-template-columns: repeat(12, 1fr); gap: 2px; }
.cells span { height: 21px; line-height: 20px; background: #000; color: #8a8a8a; text-align: center; font-weight: bold; font-size: 13px; white-space: nowrap; }
.cells .lime { background: #0f0; color: #000; }
.cells .yellow { background: #ff0; color: #000; }
.cells .red { background: #f00; color: #000; }
</style>
